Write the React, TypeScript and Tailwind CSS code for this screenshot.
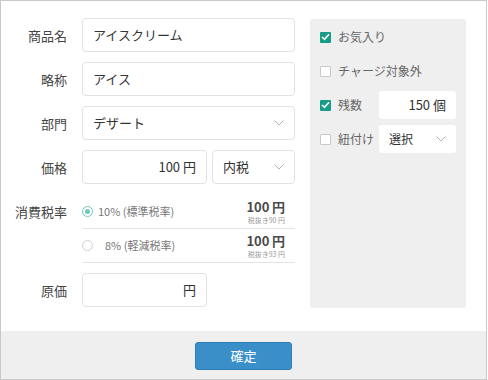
import React from "react";

const Chevron = () => (
  <svg width="10" height="6" viewBox="0 0 10 6" className="shrink-0">
    <polyline points="0.5,0.5 5,5 9.5,0.5" fill="none" stroke="#b5b5b5" strokeWidth="1" />
  </svg>
);

const Check = ({ checked }: { checked: boolean }) =>
  checked ? (
    <div className="w-[11px] h-[11px] bg-[#179c87] rounded-[1px] flex items-center justify-center shrink-0">
      <svg width="9" height="8" viewBox="0 0 9 8">
        <polyline points="1,4 3.5,6.3 8,1.2" fill="none" stroke="#fff" strokeWidth="1.6" />
      </svg>
    </div>
  ) : (
    <div className="w-[11px] h-[11px] bg-white border border-[#c8c8c8] rounded-[1px] shrink-0" />
  );

const Label = ({ children }: { children: React.ReactNode }) => (
  <div className="w-[66px] text-right text-[13px] text-[#444] shrink-0 leading-none">{children}</div>
);

const box = "bg-white border border-[#e2e2e2] rounded-[4px] h-[34px] flex items-center px-[10px] text-[13px] text-[#333]";

const Amount = ({ sub }: { sub: string }) => (
  <div className="ml-auto pr-[10px] flex flex-col items-end">
    <div className="text-[13px] font-bold text-[#4a4a4a] leading-[13px]">100&#8201;円</div>
    <div className="text-[7px] text-[#999] leading-[8px] mt-[3px]">{sub}</div>
  </div>
);

export default function App() {
  return (
    <div
      className="w-[487px] h-[380px] bg-white border border-[#c9c9c9] flex flex-col"
      style={{ fontFamily: '"Noto Sans CJK JP", "Noto Sans", sans-serif' }}
    >
      <div className="flex-1 flex pt-[17px]">
        <div className="flex flex-col w-[294px]">
          <div className="flex items-center gap-[15px]">
            <Label>商品名</Label>
            <div className={`${box} w-[213px]`}>アイスクリーム</div>
          </div>
          <div className="flex items-center gap-[15px] mt-[10px]">
            <Label>略称</Label>
            <div className={`${box} w-[213px]`}>アイス</div>
          </div>
          <div className="flex items-center gap-[15px] mt-[10px]">
            <Label>部門</Label>
            <div className={`${box} w-[213px] justify-between`}>
              <span>デザート</span>
              <Chevron />
            </div>
          </div>
          <div className="flex items-center gap-[15px] mt-[10px]">
            <Label>価格</Label>
            <div className="flex gap-[5px]">
              <div className={`${box} w-[125px] justify-end`}>100 円</div>
              <div className={`${box} w-[83px] justify-between text-[12px]`}>
                <span>内税</span>
                <Chevron />
              </div>
            </div>
          </div>
          <div className="flex gap-[15px] mt-[11px]">
            <div className="h-[33px] flex items-center justify-end w-[66px]">
              <Label>消費税率</Label>
            </div>
            <div className="w-[213px] flex flex-col">
              <div className="h-[34px] border-b border-[#e4e4e4] flex items-center">
                <div className="w-[11px] h-[11px] rounded-full border border-[#6ccab9] flex items-center justify-center">
                  <div className="w-[5px] h-[5px] rounded-full bg-[#6ccab9]" />
                </div>
                <span className="ml-[5px] text-[11px] text-[#777]">10% (標準税率)</span>
                <Amount sub="税抜き90 円" />
              </div>
              <div className="h-[34px] border-b border-[#e4e4e4] flex items-center">
                <div className="w-[11px] h-[11px] rounded-full border border-[#cfcfcf]" />
                <span className="ml-[12px] text-[11px] text-[#777]">8% (軽減税率)</span>
                <Amount sub="税抜き93 円" />
              </div>
            </div>
          </div>
          <div className="flex items-center gap-[15px] mt-[10px]">
            <Label>原価</Label>
            <div className={`${box} w-[125px] justify-end`}>円</div>
          </div>
        </div>
        <div className="ml-[15px] w-[156px] h-[289px] mt-px bg-[#efefef] rounded-[3px] px-[10px] pt-[4px] flex flex-col gap-[6px]">
          <div className="h-[28px] flex items-center gap-[7px] text-[12px] text-[#666]">
            <Check checked />
            <span>お気入り</span>
          </div>
          <div className="h-[28px] flex items-center gap-[7px] text-[12px] text-[#666]">
            <Check checked={false} />
            <span>チャージ対象外</span>
          </div>
          <div className="h-[28px] flex items-center text-[12px] text-[#666]">
            <Check checked />
            <span className="ml-[7px]">残数</span>
            <div className="ml-auto w-[77px] h-[28px] bg-white rounded-[3px] flex items-center justify-end pr-[10px] text-[13px] text-[#333]">
              150 個
            </div>
          </div>
          <div className="h-[28px] flex items-center text-[12px] text-[#666]">
            <Check checked={false} />
            <span className="ml-[7px]">紐付け</span>
            <div className="ml-auto w-[77px] h-[28px] bg-white rounded-[3px] flex items-center justify-between px-[10px] text-[12px] text-[#333]">
              <span>選択</span>
              <Chevron />
            </div>
          </div>
        </div>
      </div>
      <div className="h-[48px] bg-[#efefef] flex items-start justify-center pt-[11px]">
        <button className="w-[97px] h-[28px] bg-[#3b8fc8] border border-[#2f7fb6] rounded-[3px] text-white text-[13px]">
          確定
        </button>
      </div>
    </div>
  );
}
